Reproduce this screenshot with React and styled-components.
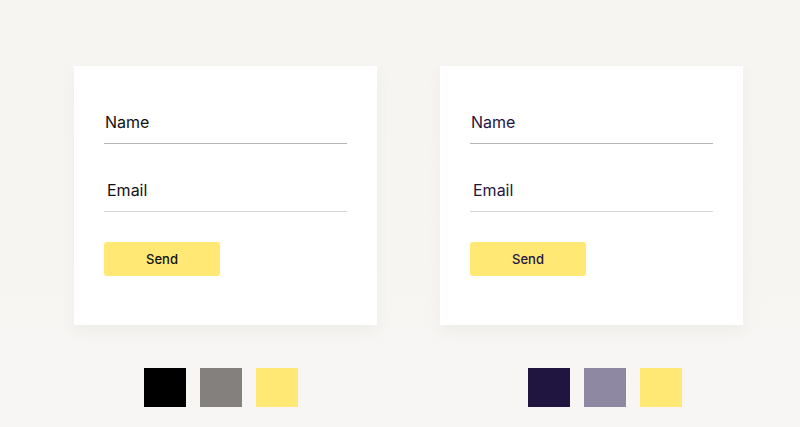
import React from "react";
import styled, { createGlobalStyle } from "styled-components";

const Global = createGlobalStyle`
  html, body { margin: 0; padding: 0; }
  body {
    width: 800px;
    height: 427px;
    overflow: hidden;
    background: linear-gradient(180deg, #f6f5f1 0%, #f8f6f4 100%);
    font-family: "Inter", "Liberation Sans", sans-serif;
  }
`;

const Page = styled.div`
  display: flex;
  gap: 63px;
  padding: 66px 0 0 74px;
`;

const Column = styled.div`
  display: flex;
  flex-direction: column;
  gap: 43px;
  width: 303px;
`;

const Card = styled.div`
  box-sizing: border-box;
  width: 303px;
  height: 259px;
  background: #ffffff;
  padding: 46px 30px 0 30px;
  display: flex;
  flex-direction: column;
  box-shadow: 0 6px 14px rgba(60, 50, 30, 0.05);
`;

const Field = styled.div`
  height: 32px;
  box-sizing: border-box;
  padding: 0 0 11px ${(p) => p.$indent}px;
  font-size: 16px;
  line-height: 20px;
  color: ${(p) => p.$ink};
  border-bottom: 1px solid ${(p) => p.$line};
  margin-bottom: ${(p) => p.$after}px;
`;

const Button = styled.div`
  width: 116px;
  height: 34px;
  border-radius: 3px;
  background: #ffe873;
  color: ${(p) => p.$ink};
  font-size: 13px;
  font-weight: 500;
  display: flex;
  align-items: center;
  justify-content: center;
`;

const Swatches = styled.div`
  display: flex;
  gap: 14px;
  padding-left: ${(p) => p.$offset}px;
`;

const Swatch = styled.div`
  width: 42px;
  height: 39px;
  background: ${(p) => p.$color};
`;

const themes = [
  { ink: "#111111", offset: 70, colors: ["#000000", "#83807d", "#ffe873"] },
  { ink: "#1f1540", offset: 88, colors: ["#1f1540", "#8f88a2", "#ffe873"] },
];

export default function App() {
  return (
    <>
      <Global />
      <Page>
        {themes.map((t, i) => (
          <Column key={i}>
            <Card>
              <Field $indent={1} $ink={t.ink} $line="#b4b4b4" $after={36}>
                Name
              </Field>
              <Field $indent={3} $ink={t.ink} $line="#d8d8d8" $after={30}>
                Email
              </Field>
              <Button $ink={t.ink}>Send</Button>
            </Card>
            <Swatches $offset={t.offset}>
              {t.colors.map((c) => (
                <Swatch key={c} $color={c} />
              ))}
            </Swatches>
          </Column>
        ))}
      </Page>
    </>
  );
}
